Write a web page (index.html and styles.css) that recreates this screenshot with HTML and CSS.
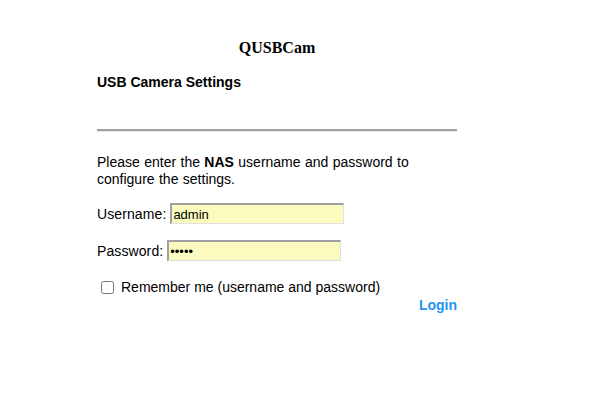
FILE: index.html
```html
<!DOCTYPE html>
<html>
<head>
<meta charset="utf-8">
<link rel="stylesheet" href="styles.css">
</head>
<body>
<div class="page">
  <h1 class="title">QUSBCam</h1>
  <h2 class="subtitle">USB Camera Settings</h2>
  <hr class="rule">
  <p class="intro">Please enter the <b>NAS</b> username and password to configure the settings.</p>
  <div class="field field-user">
    <label class="lbl">Username:</label>
    <input class="inp" type="text" value="admin">
  </div>
  <div class="field field-pass">
    <label class="lbl">Password:</label>
    <input class="inp" type="password" value="admin">
  </div>
  <div class="remember">
    <input class="chk" type="checkbox">
    <span class="rem-text">Remember me (username and password)</span>
  </div>
  <div class="actions">
    <a class="login">Login</a>
  </div>
</div>
</body>
</html>
```
FILE: styles.css
```css
html, body {
  margin: 0;
  padding: 0;
  background: #fff;
}
.page {
  width: 360px;
  margin-left: 97px;
  padding-top: 38px;
  font-family: "Liberation Sans", Arial, sans-serif;
  color: #000;
}
.title {
  margin: 0;
  text-align: center;
  font-family: "Liberation Serif", "Times New Roman", serif;
  font-size: 16px;
  font-weight: bold;
  line-height: 18px;
  padding-top: 1px;
}
.subtitle {
  margin: 17px 0 0 0;
  font-size: 14px;
  font-weight: bold;
  line-height: 16px;
}
.rule {
  margin: 39px 0 0 0;
  border: 0;
  height: 2px;
  background: #a0a0a0;
  border-bottom: 1px solid #e8e8e8;
}
.intro {
  margin: 22px 0 0 0;
  font-size: 14px;
  line-height: 17px;
  word-spacing: 0.5px;
}
.field {
  display: flex;
  align-items: center;
  margin-top: 15px;
  font-size: 14px;
}
.field-pass {
  margin-top: 16px;
}
.lbl {
  margin-right: 4px;
  letter-spacing: 0.1px;
}
.inp {
  box-sizing: border-box;
  width: 174px;
  height: 21px;
  margin: 0;
  padding: 0 1px;
  background: #fbfbc0;
  border-style: solid;
  border-width: 2px 1px 1px 2px;
  border-color: #a0a0a0 #e0e0e0 #e0e0e0 #a0a0a0;
  font-family: "Liberation Sans", Arial, sans-serif;
  font-size: 13px;
  color: #000;
  outline: none;
}
.remember {
  display: flex;
  align-items: center;
  margin-top: 18px;
  font-size: 14px;
}
.chk {
  width: 13px;
  height: 13px;
  margin: 0 7px 0 4px;
}
.actions {
  display: flex;
  justify-content: flex-end;
  margin-top: 2px;
}
.login {
  color: #2196f3;
  font-weight: bold;
  font-size: 14px;
  line-height: 17px;
  cursor: pointer;
}
```
